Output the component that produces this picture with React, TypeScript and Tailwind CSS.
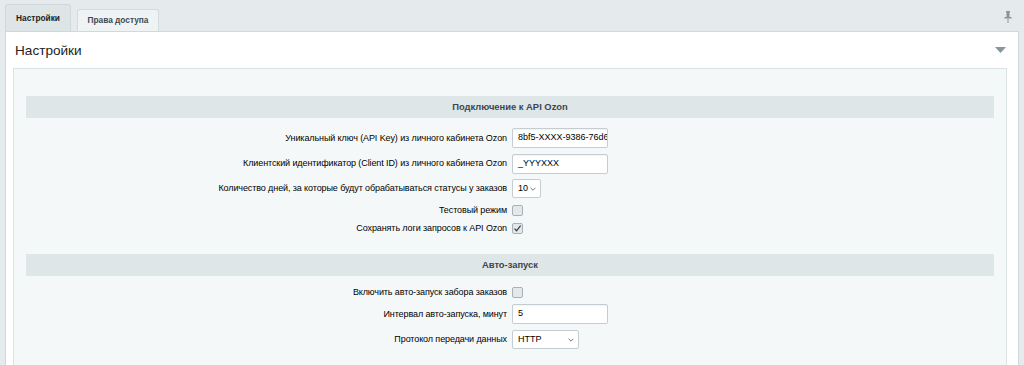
import React from "react";

const font = { fontFamily: '"Liberation Sans", Arial, sans-serif' };

function Label({ children }: { children: React.ReactNode }) {
  return <div className="text-right pr-[3px] text-[9px] tracking-[-0.1px] text-black leading-none">{children}</div>;
}

function TextInput({ value, w }: { value: string; w: string }) {
  return (
    <div className={`${w} h-[20px] bg-white border border-[#c4cdd1] rounded-[2px] flex items-center pl-[5px] overflow-hidden whitespace-nowrap text-[9px] text-black shadow-[inset_0_1px_1px_rgba(0,0,0,0.05)]`}>
      {value}
    </div>
  );
}

function Select({ value, w }: { value: string; w: string }) {
  return (
    <div className={`${w} h-[19px] bg-white border border-[#c4cdd1] rounded-[2px] flex items-center justify-between pl-[5px] pr-[4px] text-[9px] text-black`}>
      <span>{value}</span>
      <svg width="6" height="4" viewBox="0 0 6 4"><path d="M0.6 0.8 L3 3.2 L5.4 0.8" stroke="#666" strokeWidth="0.9" fill="none" /></svg>
    </div>
  );
}

function Checkbox({ checked }: { checked?: boolean }) {
  return (
    <div className="w-[11px] h-[11px] rounded-[2px] border border-[#a9b1b5] bg-[#e4e8ea] flex items-center justify-center">
      {checked && (
        <svg width="9" height="9" viewBox="0 0 9 9"><path d="M1.5 4.6 L3.6 6.8 L7.6 1.6" stroke="#3a4248" strokeWidth="1.3" fill="none" /></svg>
      )}
    </div>
  );
}

function Row({ h, label, children }: { h: string; label: string; children: React.ReactNode }) {
  return (
    <div className={`grid grid-cols-2 items-center ${h}`}>
      <Label>{label}</Label>
      <div className="pl-[2px] flex items-center">{children}</div>
    </div>
  );
}

function SectionHeader({ title }: { title: string }) {
  return (
    <div className="h-[22px] bg-[#dfe6e8] flex items-center justify-center text-[9.4px] font-bold text-[#3b4650]">
      {title}
    </div>
  );
}

export default function App() {
  return (
    <div style={font} className="w-[1024px] h-[365px] bg-[#e5ebed] overflow-hidden relative">
      <div className="flex items-end h-[31px] pl-[5px] gap-[6px]">
        <div className="h-[27px] w-[66px] bg-[#dee5e7] border border-b-0 border-[#cfd8db] rounded-t-[3px] flex items-center justify-center text-[8.3px] font-bold text-[#222]">
          Настройки
        </div>
        <div className="h-[22px] w-[82px] bg-[#eff3f4] border border-b-0 border-[#d3dbde] rounded-t-[3px] flex items-center justify-center text-[8.3px] font-bold text-[#3d4a52]">
          Права доступа
        </div>
      </div>
      <svg className="absolute left-[1003px] top-[10px]" width="10" height="14" viewBox="0 0 10 14">
        <rect x="3" y="1" width="4" height="1.5" fill="#8a959b" />
        <rect x="3.5" y="2" width="3" height="5" fill="#8a959b" />
        <rect x="1.5" y="7" width="7" height="1.5" fill="#8a959b" />
        <rect x="4.5" y="8.5" width="1" height="4.5" fill="#8a959b" />
      </svg>
      <div className="ml-[5px] mr-[5px] bg-white border border-[#cfd8db] h-[340px] flex flex-col">
        <div className="h-[36px] flex items-center justify-between pl-[9px] pr-[12px]">
          <span className="text-[13.6px] text-[#222] pt-[2px]">Настройки</span>
          <svg width="11" height="6" viewBox="0 0 11 6"><path d="M0 0 L11 0 L5.5 6 Z" fill="#8a959b" /></svg>
        </div>
        <div className="ml-[7px] mr-[11px] flex-1 bg-[#f5f8f9] border border-[#dbe3e5] pt-[27px] px-[12px]">
          <SectionHeader title="Подключение к API Ozon" />
          <div className="mt-[7px]">
            <Row h="h-[26px]" label="Уникальный ключ (API Key) из личного кабинета Ozon">
              <TextInput w="w-[96px]" value="8bf5-XXXX-9386-76d6(" />
            </Row>
            <Row h="h-[25px]" label="Клиентский идентификатор (Client ID) из личного кабинета Ozon">
              <TextInput w="w-[96px]" value="_YYYXXX" />
            </Row>
            <Row h="h-[25px]" label="Количество дней, за которые будут обрабатываться статусы у заказов">
              <Select w="w-[29px]" value="10" />
            </Row>
            <Row h="h-[18px]" label="Тестовый режим">
              <Checkbox />
            </Row>
            <Row h="h-[18px]" label="Сохранять логи запросов к API Ozon">
              <Checkbox checked />
            </Row>
          </div>
          <div className="mt-[17px]">
            <SectionHeader title="Авто-запуск" />
          </div>
          <div className="mt-[7px]">
            <Row h="h-[18px]" label="Включить авто-запуск забора заказов">
              <Checkbox />
            </Row>
            <Row h="h-[26px]" label="Интервал авто-запуска, минут">
              <TextInput w="w-[96px]" value="5" />
            </Row>
            <Row h="h-[25px]" label="Протокол передачи данных">
              <Select w="w-[67px]" value="HTTP" />
            </Row>
          </div>
        </div>
      </div>
    </div>
  );
}
